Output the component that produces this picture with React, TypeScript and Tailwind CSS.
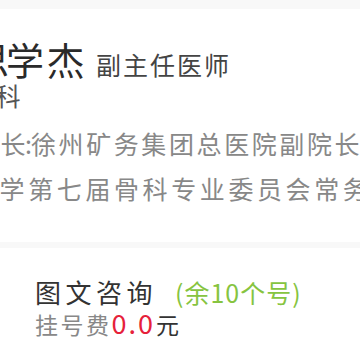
import React from "react";

export default function App() {
  return (
    <div
      className="w-[360px] h-[360px] bg-white overflow-hidden"
      style={{ fontFamily: '"Noto Sans CJK SC", "Noto Sans", sans-serif' }}
    >
      <div className="h-[9px] bg-[#f8f8f8]" />
      <div className="ml-[-32px] whitespace-nowrap">
        <div className="mt-[29px] flex items-baseline text-[38px] leading-[42px] text-[#2a2a2a]">
          <span className="ml-[3px] mr-[-3px]">思</span>
          <span className="tracking-[2.5px]">学杰</span>
          <span className="ml-[9px] text-[25px] leading-[25px] tracking-[2px] text-[#444444]">副主任医师</span>
        </div>
        <div className="mt-[3px] text-[25px] leading-[25px] tracking-[2.5px] text-[#555555]">骨科</div>
      </div>
      <div className="ml-[-33px] whitespace-nowrap text-[#888888]">
        <div className="mt-[23px] text-[25px] leading-[25px] flex items-baseline">
          <span className="ml-[6px] tracking-[2.5px]">擅长</span>
          <span className="ml-[-3px] mr-[-1px]">:</span>
          <span className="tracking-[2.6px]">徐州矿务集团总医院副院长</span>
        </div>
      </div>
      <div className="ml-[-29px] whitespace-nowrap text-[#888888]">
        <div className="mt-[20px] text-[25px] leading-[25px] tracking-[3.6px]">医学第七届骨科专业委员会常务委员</div>
      </div>
      <div className="mt-[41px] h-[6px] bg-[#f8f8f8]" />
      <div className="pl-[35px] whitespace-nowrap">
        <div className="mt-[31px] flex items-baseline">
          <span className="text-[26px] leading-[26px] tracking-[4.5px] text-[#333333]">图文咨询</span>
          <span className="ml-[18px] text-[25px] leading-[24px] tracking-[1px] text-[#86c440]">(余10个号)</span>
        </div>
        <div className="mt-[6px] flex items-baseline text-[23px] leading-[24px]">
          <span className="tracking-[2.5px] text-[#888888]">挂号费</span>
          <span className="text-[27px] tracking-[2px] text-[#e6213a]">0.0</span>
          <span className="ml-[1px] text-[#333333]">元</span>
        </div>
      </div>
    </div>
  );
}
